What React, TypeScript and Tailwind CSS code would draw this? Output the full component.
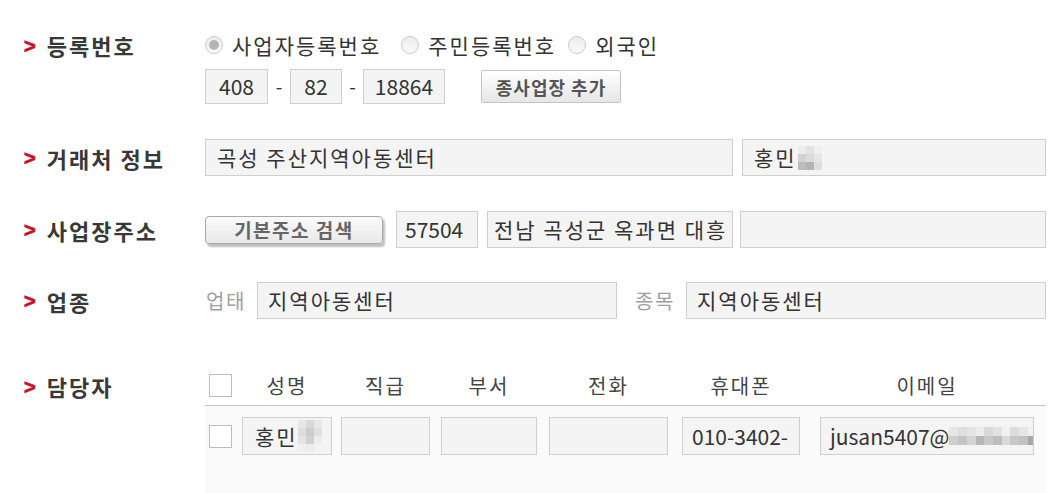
import React from 'react';

const font = { fontFamily: '"Noto Sans CJK KR", "Noto Sans", sans-serif' };

function Mosaic({ cols, cell, colors }: { cols: number; cell: string; colors: string[] }) {
  return (
    <span
      className="inline-grid shrink-0 tracking-normal"
      style={{ gridTemplateColumns: `repeat(${cols}, ${cell})`, gridAutoRows: cell }}
    >
      {colors.map((c, i) => (
        <span key={i} style={{ background: c }} />
      ))}
    </span>
  );
}

function Label({ children }: { children: React.ReactNode }) {
  return (
    <div className="w-[181px] shrink-0 flex items-center h-full">
      <span
        className="text-[#c8102e] font-bold text-[20px] leading-none mr-[11px] mt-[1px] [-webkit-text-stroke:0.8px_#c8102e]"
        style={{ fontFamily: '"Liberation Sans", sans-serif' }}
      >
        &gt;
      </span>
      <span className="text-[22px] font-bold text-[#383838] leading-none tracking-[2px]">{children}</span>
    </div>
  );
}

function Box({ className = '', children }: { className?: string; children?: React.ReactNode }) {
  return (
    <div
      className={`bg-[#f4f4f4] border border-[#cfcfcf] flex items-center text-[21px] text-[#333] whitespace-nowrap overflow-hidden leading-none ${className}`}
    >
      {children}
    </div>
  );
}

function Radio({ checked, label, className = '' }: { checked?: boolean; label: string; className?: string }) {
  return (
    <label className={`flex items-center ${className}`}>
      <span className="w-[18px] h-[18px] rounded-full border border-[#cbcbcb] bg-gradient-to-b from-[#ececec] to-[#fbfbfb] flex items-center justify-center">
        {checked && <span className="w-[10px] h-[10px] rounded-full bg-[#b4b4b4]" />}
      </span>
      <span className="ml-[9px] text-[21px] text-[#333] leading-none tracking-[2px]">{label}</span>
    </label>
  );
}

function Check() {
  return <span className="block w-[23px] h-[23px] border border-[#bdbdbd] bg-white" />;
}

const cols = [
  { h: '성명', w: 'w-[90px] mr-[9px]' },
  { h: '직급', w: 'w-[89px] mr-[11px]' },
  { h: '부서', w: 'w-[96px] mr-[12px]' },
  { h: '전화', w: 'w-[119px] mr-[14px]' },
  { h: '휴대폰', w: 'w-[118px] mr-[20px]' },
  { h: '이메일', w: 'w-[214px]' },
];

export default function App() {
  return (
    <div className="w-[1059px] h-[493px] bg-white overflow-hidden pl-[24px] pr-[13px] pt-[32px]" style={font}>
      {/* 등록번호 */}
      <div className="flex">
        <div className="h-[26px]">
          <Label>등록번호</Label>
        </div>
        <div className="flex flex-col">
          <div className="h-[26px] flex items-center">
            <Radio checked label="사업자등록번호" />
            <Radio label="주민등록번호" className="ml-[20px]" />
            <Radio label="외국인" className="ml-[12px]" />
          </div>
          <div className="mt-[11px] flex items-center h-[35px]">
            <Box className="w-[63px] h-[35px] justify-center">408</Box>
            <span className="w-[22px] text-center text-[19px] text-[#333]">-</span>
            <Box className="w-[52px] h-[35px] justify-center">82</Box>
            <span className="w-[21px] text-center text-[19px] text-[#333]">-</span>
            <Box className="w-[82px] h-[35px] justify-center">18864</Box>
            <button className="ml-[36px] w-[140px] h-[33px] border border-[#c4c4c4] rounded-[2px] bg-gradient-to-b from-[#ffffff] to-[#e6e6e6] text-[18px] font-bold text-[#555] leading-none tracking-[1px]">
              종사업장 추가
            </button>
          </div>
        </div>
      </div>

      {/* 거래처 정보 */}
      <div className="flex items-center h-[37px] mt-[35px]">
        <Label>거래처 정보</Label>
        <Box className="w-[528px] h-[37px] pl-[11px] tracking-[2px]">곡성 주산지역아동센터</Box>
        <Box className="flex-1 h-[37px] ml-[9px] pl-[11px] tracking-[2px]">
          홍민
          <span className="ml-[1px] flex">
            <Mosaic
              cols={3}
              cell="8px"
              colors={['#ececec', '#e2e2e2', '#efefef', '#d2d2d2', '#dcdcdc', '#e6e6e6', '#bcbcbc', '#b4b4b4', '#dedede']}
            />
          </span>
        </Box>
      </div>

      {/* 사업장주소 */}
      <div className="flex items-center h-[37px] mt-[35px]">
        <Label>사업장주소</Label>
        <button className="w-[178px] h-[28px] border border-[#a9a9a9] rounded-[4px] bg-gradient-to-b from-[#fafafa] to-[#e9e9e9] shadow-[2px_3px_2px_rgba(0,0,0,0.25)] text-[19px] font-bold text-[#666] leading-none tracking-[1.5px]">
          기본주소 검색
        </button>
        <Box className="w-[82px] h-[37px] ml-[13px] pl-[8px]">57504</Box>
        <Box className="w-[246px] h-[37px] ml-[9px] pl-[6px] tracking-[2px]">전남 곡성군 옥과면 대흥</Box>
        <Box className="flex-1 h-[37px] ml-[7px]" />
      </div>

      {/* 업종 */}
      <div className="flex items-center h-[37px] mt-[34px]">
        <Label>업종</Label>
        <span className="w-[52px] text-[20px] text-[#a0a0a0] leading-none pl-[1px] tracking-[1.5px]">업태</span>
        <Box className="w-[360px] h-[37px] pl-[10px] tracking-[2px]">지역아동센터</Box>
        <span className="w-[69px] pl-[18px] text-[20px] text-[#a0a0a0] leading-none tracking-[1.5px]">종목</span>
        <Box className="flex-1 h-[37px] pl-[10px] tracking-[2px]">지역아동센터</Box>
      </div>

      {/* 담당자 */}
      <div className="flex items-start mt-[47px]">
        <div className="h-[40px]">
          <Label>담당자</Label>
        </div>
        <div className="flex-1 flex flex-col">
          <div className="h-[40px] flex items-center border-b border-[#c2c6ca]">
            <div className="w-[37px] pl-[4px]">
              <Check />
            </div>
            {cols.map((c) => (
              <div key={c.h} className={`${c.w} text-center text-[20px] text-[#444] leading-none tracking-[2px]`}>
                {c.h}
              </div>
            ))}
          </div>
          <div className="bg-[#fafafa] pt-[11px] pb-[40px] flex items-center">
            <div className="w-[37px] pl-[4px]">
              <Check />
            </div>
            <Box className="w-[90px] h-[38px] mr-[9px] pl-[12px] tracking-[2px]">
              홍민
              <Mosaic
                cols={3}
                cell="8px"
                colors={['#e6e6e6', '#d8d8d8', '#e8e8e8', '#dddddd', '#cccccc', '#e0e0e0', '#e4e4e4', '#d0d0d0', '#ececec', '#f0f0f0', '#ececec', '#f2f2f2']}
              />
            </Box>
            <Box className="w-[89px] h-[38px] mr-[11px]" />
            <Box className="w-[96px] h-[38px] mr-[12px]" />
            <Box className="w-[119px] h-[38px] mr-[14px]" />
            <Box className="w-[118px] h-[38px] mr-[20px] pl-[9px]">010-3402-</Box>
            <Box className="w-[214px] h-[38px] pl-[9px]">
              jusan5407@
              <Mosaic
                cols={10}
                cell="8.7px"
                colors={[
                  '#e6e6e6', '#dedede', '#e4e4e4', '#ececec', '#d8d8d8', '#e2e2e2', '#f2f2f2', '#dcdcdc', '#e6e6e6', '#f0f0f0',
                  '#cfcfcf', '#c4c4c4', '#d4d4d4', '#b6b6b6', '#c8c8c8', '#bdbdbd', '#dadada', '#c8c8c8', '#c2c2c2', '#a8a8a8',
                ]}
              />
            </Box>
          </div>
        </div>
      </div>
    </div>
  );
}
